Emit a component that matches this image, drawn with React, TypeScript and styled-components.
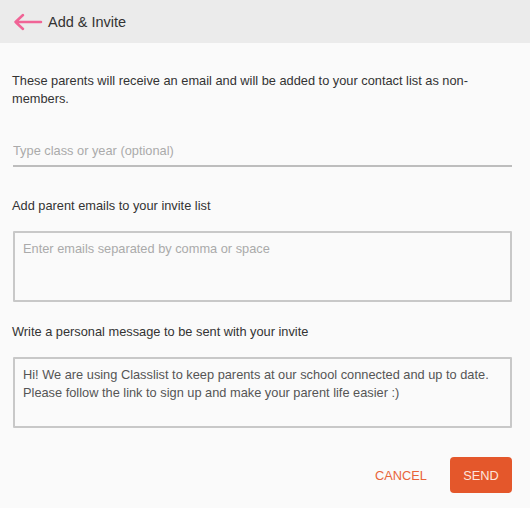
import styled, { createGlobalStyle } from "styled-components";

const GlobalStyle = createGlobalStyle`
  html, body {
    margin: 0;
    padding: 0;
    background: #fafafa;
    font-family: "Liberation Sans", Arial, sans-serif;
  }
  * { box-sizing: border-box; }
`;

const Page = styled.div`
  width: 530px;
  min-height: 508px;
  background: #fafafa;
`;

const Header = styled.header`
  height: 43px;
  background: #ebebeb;
  display: flex;
  align-items: center;
  padding-left: 13px;
  gap: 5px;
`;

const BackButton = styled.button`
  border: none;
  background: none;
  padding: 0;
  display: flex;
  align-items: center;
  cursor: pointer;
`;

const Title = styled.h1`
  margin: 0;
  font-size: 14.5px;
  font-weight: 400;
  color: #333;
  padding-top: 1px;
`;

const Body = styled.div`
  padding: 0 18px 0 12px;
  display: flex;
  flex-direction: column;
`;

const Intro = styled.p`
  margin: 29px 0 0;
  font-size: 12.8px;
  line-height: 18px;
  color: #333;
`;

const LineInput = styled.input`
  margin-top: 28px;
  margin-left: 1px;
  height: 31px;
  border: none;
  border-bottom: 2px solid #bdbdbd;
  background: transparent;
  font-family: inherit;
  font-size: 12.8px;
  color: #333;
  padding: 0;
  &::placeholder { color: #aaa; }
  &:focus { outline: none; }
`;

const Label = styled.label<{ $top: number }>`
  display: block;
  font-size: 12.8px;
  line-height: 18px;
  color: #333;
  margin-top: ${(p) => p.$top}px;
`;

const Box = styled.textarea`
  margin-top: 16px;
  margin-left: 1px;
  height: 71px;
  width: 499px;
  border: 2px solid #c8c8c8;
  border-radius: 1px;
  background: #fafafa;
  resize: none;
  font-family: inherit;
  font-size: 12.8px;
  line-height: 18px;
  color: #555;
  padding: 7px 8px;
  &::placeholder { color: #aaa; }
  &:focus { outline: none; }
`;

const Actions = styled.div`
  margin-top: 29px;
  display: flex;
  justify-content: flex-end;
  align-items: center;
  gap: 14px;
`;

const TextButton = styled.button`
  border: none;
  background: none;
  font-family: inherit;
  font-size: 12.8px;
  color: #e8643a;
  padding: 0 9px;
  height: 36px;
  cursor: pointer;
`;

const SendButton = styled.button`
  border: none;
  background: #e4572b;
  color: #fde5dc;
  font-family: inherit;
  font-size: 12.8px;
  width: 62px;
  height: 36px;
  border-radius: 4px;
  cursor: pointer;
`;

export default function App() {
  return (
    <Page>
      <GlobalStyle />
      <Header>
        <BackButton aria-label="Back">
          <svg width="30" height="20" viewBox="0 0 30 20" fill="none">
            <path
              d="M28 10H2.5M10 3L2.5 10l7.5 7"
              stroke="#f06496"
              strokeWidth="2.5"
              strokeLinecap="round"
              strokeLinejoin="round"
            />
          </svg>
        </BackButton>
        <Title>Add &amp; Invite</Title>
      </Header>
      <Body>
        <Intro>
          These parents will receive an email and will be added to your contact list as non-members.
        </Intro>
        <LineInput placeholder="Type class or year (optional)" />
        <Label $top={30}>Add parent emails to your invite list</Label>
        <Box placeholder="Enter emails separated by comma or space" />
        <Label $top={21}>Write a personal message to be sent with your invite</Label>
        <Box defaultValue="Hi! We are using Classlist to keep parents at our school connected and up to date. Please follow the link to sign up and make your parent life easier :)" />
        <Actions>
          <TextButton>CANCEL</TextButton>
          <SendButton>SEND</SendButton>
        </Actions>
      </Body>
    </Page>
  );
}
